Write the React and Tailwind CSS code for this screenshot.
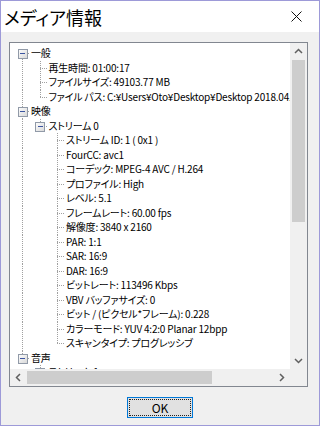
import React from "react";

const font = { fontFamily: "'Noto Sans CJK JP', 'Noto Sans', sans-serif" };

// level, text, expander, last (no following sibling)
const rows = [
  { level: 0, text: "一般", box: true, last: false },
  { level: 1, text: "再生時間: 01:00:17", last: false },
  { level: 1, text: "ファイルサイズ: 49103.77 MB", last: false },
  { level: 1, text: "ファイル パス: C:¥Users¥Oto¥Desktop¥Desktop 2018.04.25 - 01.00.17.01.mp4", last: true },
  { level: 0, text: "映像", box: true, last: false },
  { level: 1, text: "ストリーム 0", box: true, last: true },
  { level: 2, text: "ストリーム ID: 1 ( 0x1 )", last: false },
  { level: 2, text: "FourCC: avc1", last: false },
  { level: 2, text: "コーデック: MPEG-4 AVC / H.264", last: false },
  { level: 2, text: "プロファイル: High", last: false },
  { level: 2, text: "レベル: 5.1", last: false },
  { level: 2, text: "フレームレート: 60.00 fps", last: false },
  { level: 2, text: "解像度: 3840 x 2160", last: false },
  { level: 2, text: "PAR: 1:1", last: false },
  { level: 2, text: "SAR: 16:9", last: false },
  { level: 2, text: "DAR: 16:9", last: false },
  { level: 2, text: "ビットレート: 113496 Kbps", last: false },
  { level: 2, text: "VBV バッファサイズ: 0", last: false },
  { level: 2, text: "ビット / (ピクセル*フレーム): 0.228", last: false },
  { level: 2, text: "カラーモード: YUV 4:2:0 Planar 12bpp", last: false },
  { level: 2, text: "スキャンタイプ: プログレッシブ", last: true },
  { level: 0, text: "音声", box: true, last: true },
  { level: 1, text: "ストリーム 1", box: true, last: true },
];

const ROW_H = 14.5;
const X0 = 12;
const STEP = 17.5;

// which ancestor levels still have siblings below this row
function openLevels(index) {
  const open = [];
  const row = rows[index];
  for (let k = 0; k < row.level; k++) {
    let a = index;
    while (a >= 0 && rows[a].level !== k) a--;
    open.push(a >= 0 && !rows[a].last);
  }
  return open;
}

function Connector({ index }) {
  const row = rows[index];
  const open = openLevels(index);
  const width = X0 + STEP * row.level + 9;
  const x = X0 + STEP * row.level;
  const mid = ROW_H / 2;
  const dot = { stroke: "#a0a0a0", strokeWidth: 1, strokeDasharray: "1 1", shapeRendering: "crispEdges" };
  return (
    <svg width={width} height={ROW_H} className="shrink-0 overflow-visible">
      {open.map((isOpen, k) =>
        isOpen ? <line key={k} x1={X0 + STEP * k + 0.5} y1={0} x2={X0 + STEP * k + 0.5} y2={ROW_H} {...dot} /> : null
      )}
      <line x1={x + 0.5} y1={index === 0 ? mid : 0} x2={x + 0.5} y2={row.last ? mid : ROW_H} {...dot} />
      <line x1={x} y1={mid} x2={x + 8} y2={mid} {...dot} />
      {row.box && (
        <g shapeRendering="crispEdges">
          <defs>
            <linearGradient id={`g${index}`} x1="0" y1="0" x2="1" y2="1">
              <stop offset="0" stopColor="#ffffff" />
              <stop offset="1" stopColor="#d8d8d8" />
            </linearGradient>
          </defs>
          <rect x={x - 4} y={mid - 4} width="9" height="9" fill={`url(#g${index})`} stroke="#919aa8" />
          <line x1={x - 2} y1={mid + 0.5} x2={x + 3} y2={mid + 0.5} stroke="#3c55a0" />
        </g>
      )}
    </svg>
  );
}

function Chevron({ dir }) {
  const pts = {
    up: "1,5 4.5,1.5 8,5",
    down: "1,2 4.5,5.5 8,2",
    left: "5,1 1.5,4.5 5,8",
    right: "2,1 5.5,4.5 2,8",
  }[dir];
  const vertical = dir === "up" || dir === "down";
  return (
    <svg width={vertical ? 9 : 7} height={vertical ? 7 : 9}>
      <polyline points={pts} fill="none" stroke="#606060" strokeWidth="1.5" />
    </svg>
  );
}

export default function App() {
  return (
    <div
      className="flex h-[426px] w-[320px] flex-col border border-[#9d9ad8] bg-[#f0f0f0] [font-feature-settings:'palt']"
      style={font}
    >
      <div className="flex h-[31px] shrink-0 items-center justify-between bg-white pl-[3px] pr-[17px]">
        <span className="text-[18px] leading-none text-black">メディア情報</span>
        <svg width="11" height="11" viewBox="0 0 11 11">
          <path d="M0.5 0.5 L10.5 10.5 M10.5 0.5 L0.5 10.5" stroke="#111" strokeWidth="1" />
        </svg>
      </div>

      <div className="flex flex-1 flex-col items-start pl-[8px] pt-[10px]">
        <div className="grid h-[345px] w-[299px] grid-cols-[280px_17px] grid-rows-[326px_17px] border border-[#828790] bg-white">
          <div className="overflow-hidden whitespace-nowrap pt-[3px] text-[10px] tracking-[-0.2px] text-black">
            {rows.map((row, i) => (
              <div key={i} className="flex h-[14.5px] items-center">
                <Connector index={i} />
                <span className="leading-none">{row.text}</span>
              </div>
            ))}
          </div>

          <div className="flex flex-col bg-[#f0f0f0]">
            <div className="flex h-[17px] items-center justify-center">
              <Chevron dir="up" />
            </div>
            <div className="flex-1">
              <div className="mx-[2px] h-[162px] bg-[#cdcdcd]" />
            </div>
            <div className="flex h-[17px] items-center justify-center">
              <Chevron dir="down" />
            </div>
          </div>

          <div className="flex bg-[#f0f0f0]">
            <div className="flex w-[17px] items-center justify-center">
              <Chevron dir="left" />
            </div>
            <div className="flex-1 py-[2px]">
              <div className="h-full w-[185px] bg-[#cdcdcd]" />
            </div>
            <div className="flex w-[17px] items-center justify-center">
              <Chevron dir="right" />
            </div>
          </div>

          <div className="bg-[#f0f0f0]" />
        </div>

        <button
          type="button"
          className="mt-[10px] ml-[118px] flex h-[21px] w-[66px] items-center justify-center border border-[#0078d7] bg-[#e1e1e1] p-[1px]"
        >
          <span className="flex h-full w-full items-center justify-center border border-dotted border-[#222] text-[12px] leading-none text-black">
            OK
          </span>
        </button>
      </div>
    </div>
  );
}
